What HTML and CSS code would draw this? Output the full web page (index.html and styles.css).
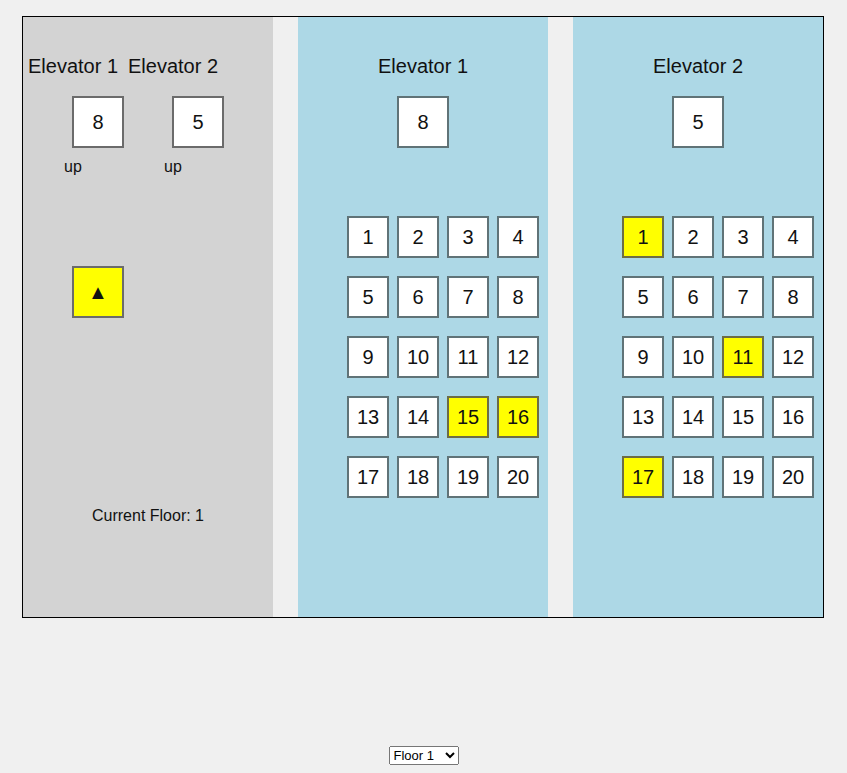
FILE: index.html
```html
<!DOCTYPE html>
<html>
<head>
<meta charset="utf-8">
<link rel="stylesheet" href="styles.css">
</head>
<body>
<div class="frame">
  <div class="panel panel-lobby">
    <div class="lobby-row heads">
      <div class="lobby-col">Elevator 1</div>
      <div class="lobby-col">Elevator 2</div>
    </div>
    <div class="lobby-row boxes">
      <div class="lobby-col"><div class="box">8</div></div>
      <div class="lobby-col"><div class="box">5</div></div>
    </div>
    <div class="lobby-row dirs">
      <div class="lobby-col">up</div>
      <div class="lobby-col">up</div>
    </div>
    <div class="call-wrap"><div class="box box-yellow call">▲</div></div>
    <div class="current">Current Floor: 1</div>
  </div>
  <div class="gap"></div>
  <div class="panel panel-car">
    <div class="car-title">Elevator 1</div>
    <div class="box car-box">8</div>
    <div class="keys">
      <div class="box key">1</div><div class="box key">2</div><div class="box key">3</div><div class="box key">4</div>
      <div class="box key">5</div><div class="box key">6</div><div class="box key">7</div><div class="box key">8</div>
      <div class="box key">9</div><div class="box key">10</div><div class="box key">11</div><div class="box key">12</div>
      <div class="box key">13</div><div class="box key">14</div><div class="box key box-yellow">15</div><div class="box key box-yellow">16</div>
      <div class="box key">17</div><div class="box key">18</div><div class="box key">19</div><div class="box key">20</div>
    </div>
  </div>
  <div class="gap"></div>
  <div class="panel panel-car">
    <div class="car-title">Elevator 2</div>
    <div class="box car-box">5</div>
    <div class="keys">
      <div class="box key box-yellow">1</div><div class="box key">2</div><div class="box key">3</div><div class="box key">4</div>
      <div class="box key">5</div><div class="box key">6</div><div class="box key">7</div><div class="box key">8</div>
      <div class="box key">9</div><div class="box key">10</div><div class="box key box-yellow">11</div><div class="box key">12</div>
      <div class="box key">13</div><div class="box key">14</div><div class="box key">15</div><div class="box key">16</div>
      <div class="box key box-yellow">17</div><div class="box key">18</div><div class="box key">19</div><div class="box key">20</div>
    </div>
  </div>
</div>
<div class="picker">
  <select class="floor-select">
    <option>Floor 1</option>
    <option>Floor 2</option>
  </select>
</div>
</body>
</html>
```
FILE: styles.css
```css
html, body {
  margin: 0;
  padding: 0;
  background: #f0f0f0;
  font-family: "Liberation Sans", Arial, sans-serif;
  color: #111;
}

body {
  padding-top: 16px;
}

.frame {
  width: 800px;
  height: 600px;
  margin: 0 0 0 22px;
  border: 1px solid #000;
  display: flex;
}

.gap {
  width: 25px;
  flex: none;
}

.panel {
  width: 250px;
  flex: none;
  box-sizing: border-box;
  padding-top: 37px;
}

.panel-lobby {
  background: #d3d3d3;
}

.panel-car {
  background: #add8e6;
}

.box {
  box-sizing: border-box;
  width: 52px;
  height: 52px;
  border: 2px solid #6b6b6b;
  background: #fff;
  display: flex;
  align-items: center;
  justify-content: center;
  font-size: 20px;
}

.panel-car .box {
  border-color: #607377;
}

.box-yellow {
  background: #ffff00;
}

.panel-car .box-yellow {
  border-color: #6d6d45;
}

.lobby-row {
  display: flex;
}

.lobby-col {
  width: 100px;
  box-sizing: border-box;
}

.heads .lobby-col {
  text-align: center;
  font-size: 20px;
  line-height: 24px;
}

.boxes {
  margin-top: 18px;
}

.boxes .lobby-col {
  padding-left: 49px;
}

.dirs {
  margin-top: 10px;
  font-size: 16px;
  line-height: 18px;
}

.dirs .lobby-col {
  padding-left: 41px;
}

.call-wrap {
  margin-top: 90px;
  padding-left: 49px;
}

.call {
  font-size: 20px;
}

.current {
  margin-top: 189px;
  text-align: center;
  font-size: 16px;
  line-height: 18px;
}

.car-title {
  text-align: center;
  font-size: 20px;
  line-height: 24px;
}

.car-box {
  margin: 18px auto 0;
}

.keys {
  margin-top: 68px;
  margin-left: 49px;
  display: grid;
  grid-template-columns: repeat(4, 42px);
  column-gap: 8px;
  row-gap: 18px;
}

.key {
  width: 42px;
  height: 42px;
}

.picker {
  margin-top: 128px;
  text-align: center;
}

.floor-select {
  font-family: "Liberation Sans", Arial, sans-serif;
  font-size: 13px;
  height: 19px;
  width: 70px;
}
```
